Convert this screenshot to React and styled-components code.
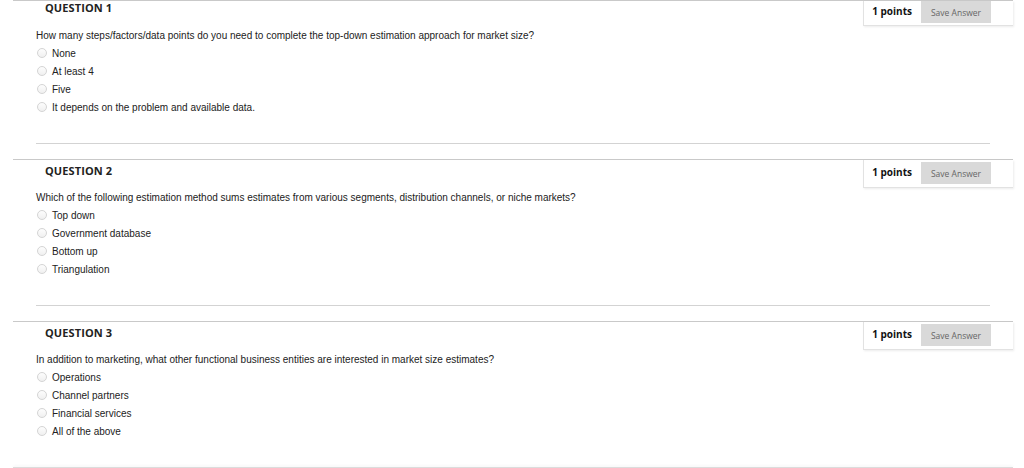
import React from 'react'
import styled, { createGlobalStyle } from 'styled-components'

const GlobalStyle = createGlobalStyle`
  html, body {
    margin:0;
    padding:0;
    background:#fff;
  }
  body {
    font-family:"Liberation Sans", Arial, sans-serif;
    color:#222;
    overflow:hidden;
  }
`

const questions = [
  {
    title: 'QUESTION 1',
    text: 'How many steps/factors/data points do you need to complete the top-down estimation approach for market size?',
    options: ['None', 'At least 4', 'Five', 'It depends on the problem and available data.'],
  },
  {
    title: 'QUESTION 2',
    text: 'Which of the following estimation method sums estimates from various segments, distribution channels, or niche markets?',
    options: ['Top down', 'Government database', 'Bottom up', 'Triangulation'],
  },
  {
    title: 'QUESTION 3',
    text: 'In addition to marketing, what other functional business entities are interested in market size estimates?',
    options: ['Operations', 'Channel partners', 'Financial services', 'All of the above'],
  },
]

const Page = styled.main`
  width:1000px;
  margin-left:13px;
`

const Block = styled.section`
  display:flex;
  flex-direction:column;
`

const Header = styled.header`
  display:flex;
  align-items:flex-start;
  justify-content:space-between;
  border-top:1px solid #c9c9c9;
  height:${p => (p.$first ? 25 : 28)}px;
`

const Title = styled.h3`
  margin:0;
  padding:${p => (p.$first ? 0 : 4)}px 0 0 32px;
  font-family:"Open Sans", sans-serif;
  font-size:11px;
  line-height:13px;
  font-weight:700;
  color:#222;
  letter-spacing:0.1px;
`

const PointsBox = styled.div`
  display:flex;
  align-items:flex-start;
  gap:9px;
  height:100%;
  box-sizing:border-box;
  padding:${p => (p.$first ? 0 : 2)}px 22px 0 8px;
  border-left:1px solid #e2e2e2;
  border-bottom:1px solid #e2e2e2;
  box-shadow:1px 1px 2px rgba(0,0,0,0.08);
`

const Points = styled.span`
  font-family:"Open Sans", sans-serif;
  font-size:10px;
  font-weight:700;
  line-height:21px;
  color:#111;
  white-space:nowrap;
`

const SaveButton = styled.button`
  width:70px;
  height:22px;
  border:0;
  padding:0;
  background:#d9d9d9;
  font-family:"Open Sans", sans-serif;
  font-size:8.5px;
  color:#666;
  cursor:pointer;
`

const Body = styled.div`
  padding:4px 0 0 23px;
`

const QuestionText = styled.p`
  margin:0 0 2px;
  font-size:10px;
  line-height:12px;
  color:#222;
`

const Options = styled.ul`
  list-style:none;
  margin:0;
  padding:0;
`

const Option = styled.li`
  display:flex;
  align-items:center;
  height:18px;
  font-size:10px;
  color:#222;
`

const Radio = styled.span`
  width:10px;
  height:10px;
  margin:0 5px 0 1px;
  border-radius:50%;
  border:1px solid #d4d4d4;
  background:linear-gradient(#fdfdfd, #f0f0f0);
  box-sizing:border-box;
  flex-shrink:0;
`

const Separator = styled.hr`
  margin:${p => (p.$last ? '27px 0 0' : '27px 23px 15px')};
  border:0;
  border-top:1px solid ${p => (p.$last ? '#dcdcdc' : '#d3d3d3')};
  box-shadow:${p => (p.$last ? '0 -1px 3px rgba(0,0,0,0.08)' : 'none')};
`

const Question = ({ q, first, last }) => (
  <Block>
    <Header $first={first}>
      <Title $first={first}>{q.title}</Title>
      <PointsBox $first={first}>
        <Points>1 points</Points>
        <SaveButton>Save Answer</SaveButton>
      </PointsBox>
    </Header>
    <Body>
      <QuestionText>{q.text}</QuestionText>
      <Options>
        {q.options.map(o => (
          <Option key={o}>
            <Radio />
            {o}
          </Option>
        ))}
      </Options>
    </Body>
    <Separator $last={last} />
  </Block>
)

const App = () => (
  <>
    <GlobalStyle />
    <Page>
      {questions.map((q, i) => (
        <Question key={q.title} q={q} first={i === 0} last={i === questions.length - 1} />
      ))}
    </Page>
  </>
)

export default App
